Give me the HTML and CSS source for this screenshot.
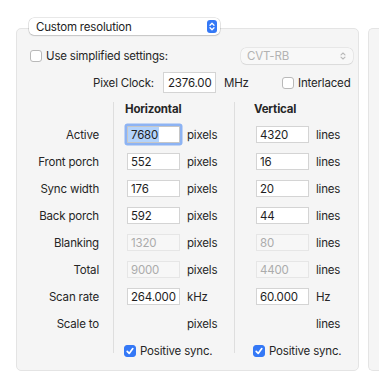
FILE: index.html
```html
<!DOCTYPE html>
<html>
<head>
<meta charset="utf-8">
<link rel="stylesheet" href="styles.css">
</head>
<body>
<div class="window">
  <div class="group">
    <div class="popup">
      <span class="popup-text">Custom resolution</span>
      <span class="stepper">
        <svg width="10" height="13" viewBox="0 0 10 13"><path d="M3 5.2 L5 3.2 L7 5.2 M3 7.8 L5 9.8 L7 7.8" fill="none" stroke="#fff" stroke-width="1.3" stroke-linecap="round" stroke-linejoin="round"/></svg>
      </span>
    </div>
    <div class="box">
      <div class="row1">
        <span class="check"></span>
        <span class="lbl">Use simplified settings:</span>
        <div class="popup2">
          <span>CVT-RB</span>
          <svg width="8" height="10" viewBox="0 0 8 10"><path d="M2 3.8 L4 2 L6 3.8 M2 6.2 L4 8 L6 6.2" fill="none" stroke="#b8b8b8" stroke-width="1.1" stroke-linecap="round" stroke-linejoin="round"/></svg>
        </div>
      </div>
      <div class="row2">
        <span class="clock-label">Pixel Clock:</span>
        <span class="field tall">2376.00</span>
        <span class="mhz">MHz</span>
        <span class="check"></span>
        <span class="lbl">Interlaced</span>
      </div>
      <div class="cols">
        <div class="col labels">
          <div class="head"></div>
          <div class="r">Active</div>
          <div class="r">Front porch</div>
          <div class="r">Sync width</div>
          <div class="r">Back porch</div>
          <div class="r">Blanking</div>
          <div class="r">Total</div>
          <div class="r">Scan rate</div>
          <div class="r">Scale to</div>
        </div>
        <div class="col h">
          <div class="head">Horizontal</div>
          <div class="r"><span class="field focus"><span class="sel">7680</span></span><span class="unit">pixels</span></div>
          <div class="r"><span class="field">552</span><span class="unit">pixels</span></div>
          <div class="r"><span class="field">176</span><span class="unit">pixels</span></div>
          <div class="r"><span class="field">592</span><span class="unit">pixels</span></div>
          <div class="r"><span class="field dis">1320</span><span class="unit">pixels</span></div>
          <div class="r"><span class="field dis">9000</span><span class="unit">pixels</span></div>
          <div class="r"><span class="field">264.000</span><span class="unit">kHz</span></div>
          <div class="r"><span class="nofield"></span><span class="unit">pixels</span></div>
          <div class="r sync"><span class="check on"><svg width="12" height="12" viewBox="0 0 12 12"><path d="M3.2 6.3 L5.2 8.4 L8.8 3.6" fill="none" stroke="#fff" stroke-width="1.7" stroke-linecap="round" stroke-linejoin="round"/></svg></span><span class="lbl">Positive sync.</span></div>
        </div>
        <div class="col v">
          <div class="head">Vertical</div>
          <div class="r"><span class="field">4320</span><span class="unit">lines</span></div>
          <div class="r"><span class="field">16</span><span class="unit">lines</span></div>
          <div class="r"><span class="field">20</span><span class="unit">lines</span></div>
          <div class="r"><span class="field">44</span><span class="unit">lines</span></div>
          <div class="r"><span class="field dis">80</span><span class="unit">lines</span></div>
          <div class="r"><span class="field dis">4400</span><span class="unit">lines</span></div>
          <div class="r"><span class="field">60.000</span><span class="unit">Hz</span></div>
          <div class="r"><span class="nofield"></span><span class="unit">lines</span></div>
          <div class="r sync"><span class="check on"><svg width="12" height="12" viewBox="0 0 12 12"><path d="M3.2 6.3 L5.2 8.4 L8.8 3.6" fill="none" stroke="#fff" stroke-width="1.7" stroke-linecap="round" stroke-linejoin="round"/></svg></span><span class="lbl">Positive sync.</span></div>
        </div>
      </div>
    </div>
  </div>
  <div class="box side"></div>
</div>
</body>
</html>
```
FILE: styles.css
```css
* { box-sizing: border-box; }
html, body { margin: 0; padding: 0; background: #ffffff; }
body {
  font-family: "Inter", "Liberation Sans", sans-serif;
  font-size: 11.5px;
  letter-spacing: -0.18px;
  color: #262626;
  overflow: hidden;
  width: 379px;
  height: 388px;
}
.window {
  display: flex;
  align-items: flex-end;
  gap: 9px;
  padding: 18px 0 0 16px;
  width: 379px;
  overflow: hidden;
}
.group { display: flex; flex-direction: column; flex: none; }
.popup {
  position: relative;
  z-index: 2;
  margin-left: 13px;
  margin-bottom: -7px;
  width: 191px;
  height: 17px;
  background: #fff;
  border-radius: 5px;
  box-shadow: 0 0 0 0.5px rgba(0,0,0,0.18), 0 1px 1.5px rgba(0,0,0,0.12);
  display: flex;
  align-items: center;
  padding-left: 7px;
  padding-right: 3px;
}
.popup-text { flex: 1; color: #222; }
.stepper {
  width: 10px;
  height: 13px;
  border-radius: 3px;
  background: #3478f6;
  display: flex;
}
.box {
  width: 343px;
  height: 343px;
  background: #f5f5f5;
  border: 1px solid #e4e4e4;
  border-radius: 5px;
  padding: 19px 5px 0 13px;
  flex: none;
}
.box.side {
  width: 11px;
  padding: 0;
  border-right: 0;
  border-radius: 5px 0 0 5px;
}
.row1 { display: flex; align-items: center; height: 16px; }
.check {
  width: 12px;
  height: 12px;
  border-radius: 3px;
  background: #fff;
  border: 1px solid #b9b9b9;
  flex: none;
  display: flex;
}
.check.on { background: #3478f6; border-color: #3478f6; }
.check.on svg { margin: -1px; }
.lbl { margin-left: 4px; white-space: nowrap; }
.popup2 {
  margin-left: auto;
  width: 112px;
  height: 16px;
  border-radius: 5px;
  background: #f8f8f8;
  box-shadow: 0 0 0 0.5px rgba(0,0,0,0.1), 0 0.5px 1px rgba(0,0,0,0.06);
  display: flex;
  align-items: center;
  justify-content: space-between;
  padding: 0 6px 0 6px;
  color: #b3b3b3;
}
.row2 { display: flex; align-items: center; height: 21px; margin-top: 8px; }
.clock-label { width: 124px; text-align: right; flex: none; }
.field {
  display: flex;
  align-items: center;
  width: 53px;
  height: 17px;
  background: #fff;
  border: 1px solid #d4d4d4;
  padding-left: 3px;
  flex: none;
  color: #1e1e1e;
  white-space: nowrap;
}
.row2 .field { margin-left: 9px; height: 21px; padding-left: 4px; }
.field.dis { background: #f7f7f7; border-color: #e6e6e6; color: #ababab; }
.field.focus {
  padding-left: 0;
  border-color: #c6c6c6;
  box-shadow: 0 0 0 2.5px #8db3f3;
  border-radius: 1px;
}
.sel { background: #b3d3fc; height: 100%; display: flex; align-items: center; padding: 0 1px 0 3px; }
.nofield { width: 53px; flex: none; }
.mhz { width: 58px; margin-left: 8px; flex: none; }
.cols { display: flex; margin-top: 9px; height: 251px; }
.col { display: flex; flex-direction: column; flex: none; }
.col.labels { width: 83px; padding-right: 14px; align-items: flex-end; }
.col.h { width: 121px; border-left: 1px solid #dedede; padding-left: 11px; }
.col.v { width: 124px; border-left: 1px solid #dedede; padding-left: 19px; }
.head { height: 19px; font-weight: 700; line-height: 15px; flex: none; }
.r { height: 27px; display: flex; align-items: center; flex: none; white-space: nowrap; }
.col.h .r .field, .col.v .r .field, .col .r .nofield { margin-left: 2px; }
.unit { margin-left: 7px; }
.r.sync .check { margin-left: -1px; }
```
